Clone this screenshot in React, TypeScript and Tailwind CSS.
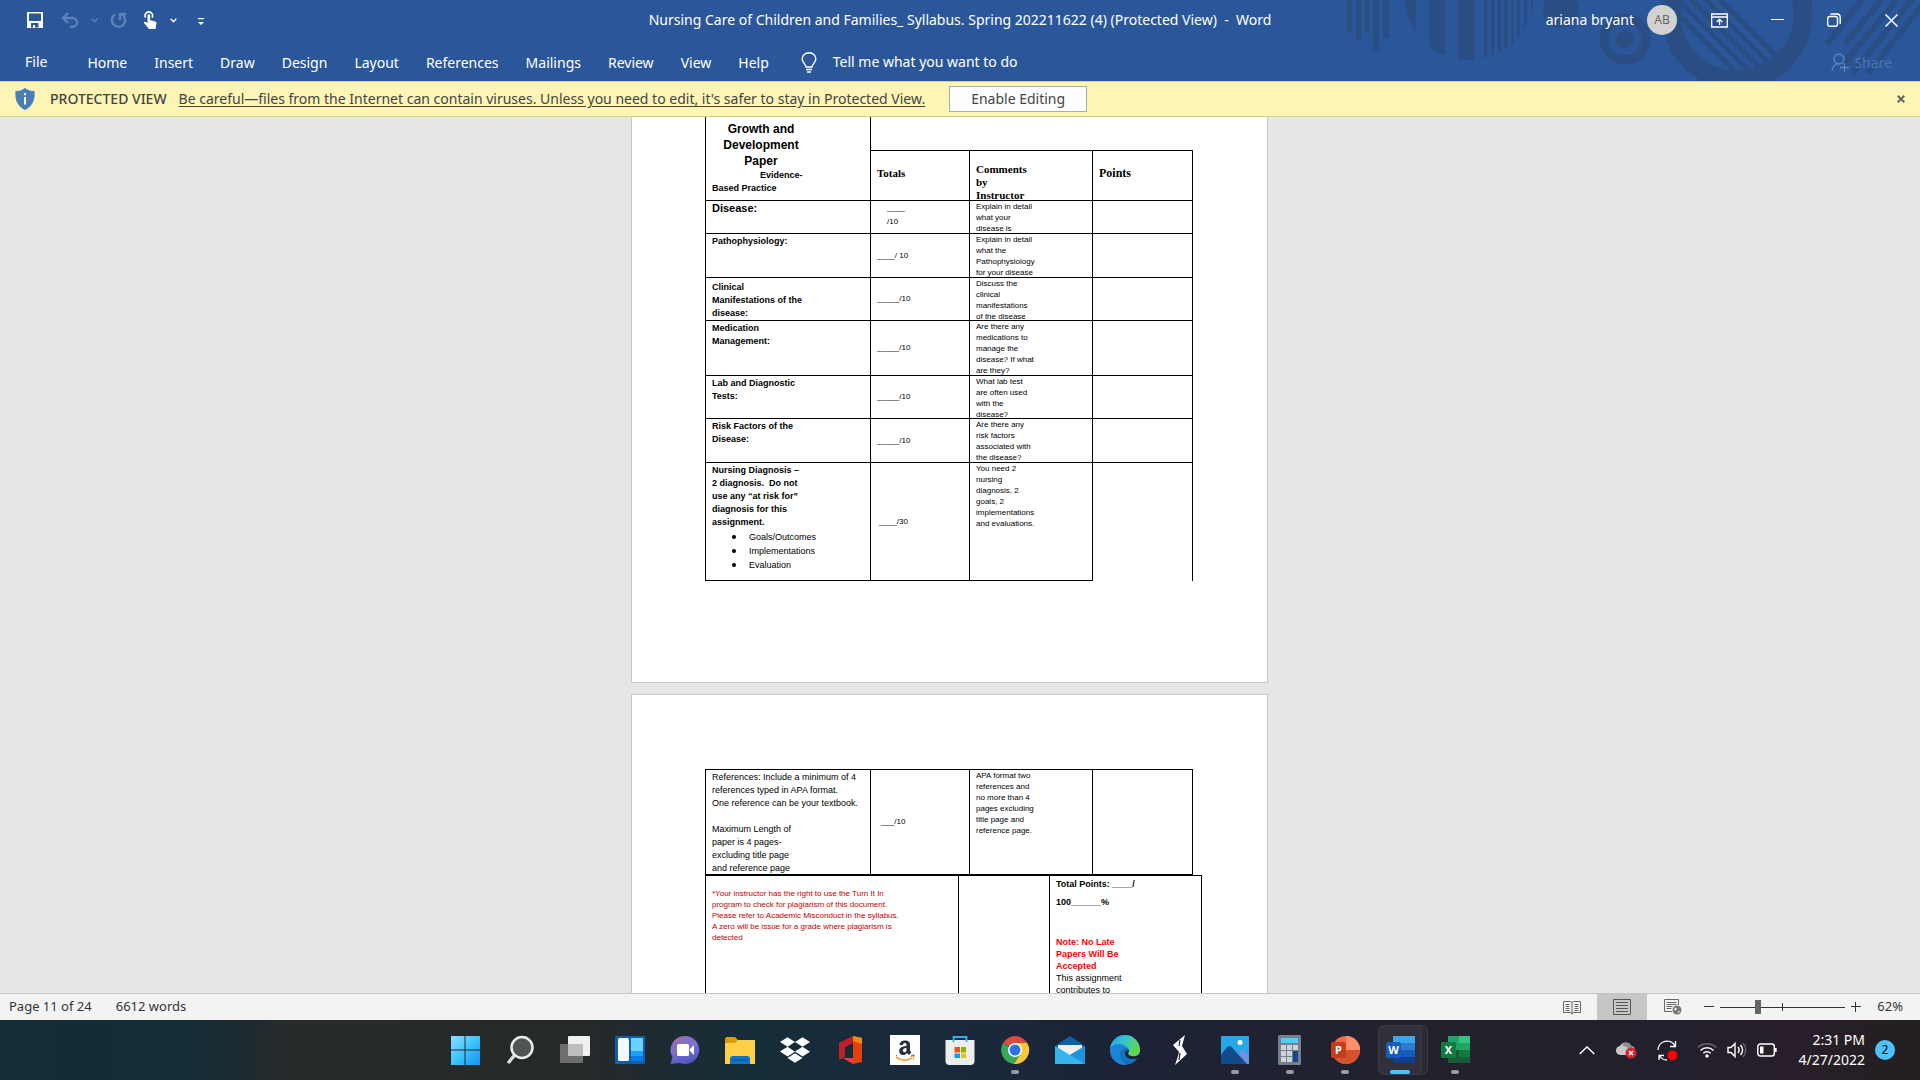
import type { ReactNode } from "react";
import { FaAmazon, FaDropbox } from "react-icons/fa";

type RubricRow = {
  title: string[];
  score: string;
  comment: string[];
  height: string;
  titlePad?: string;
};

const TABS = ["Home", "Insert", "Draw", "Design", "Layout", "References", "Mailings", "Review", "View", "Help"];

const ROWS: RubricRow[] = [
  {
    title: ["Pathophysiology:"],
    score: "____/ 10",
    comment: ["Explain in detail", "what the", "Pathophysiology", "for your disease"],
    height: "h-[44px]",
  },
  {
    title: ["Clinical", "Manifestations of the", "disease:"],
    score: "_____/10",
    comment: ["Discuss the", "clinical", "manifestations", "of the disease"],
    height: "h-[43px]",
    titlePad: "pt-[3px]",
  },
  {
    title: ["Medication", "Management:"],
    score: "_____/10",
    comment: ["Are there any", "medications to", "manage the", "disease? If what", "are they?"],
    height: "h-[55px]",
  },
  {
    title: ["Lab and Diagnostic", "Tests:"],
    score: "_____/10",
    comment: ["What lab test", "are often used", "with the", "disease?"],
    height: "h-[43px]",
  },
  {
    title: ["Risk Factors of the", "Disease:"],
    score: "_____/10",
    comment: ["Are there any", "risk factors", "associated with", "the disease?"],
    height: "h-[44px]",
  },
];

function Lines({ text }: { text: string[] }) {
  return (
    <>
      {text.map((t, i) => (
        <div key={i} className="whitespace-pre">{t}</div>
      ))}
    </>
  );
}

function Comment({ text }: { text: string[] }) {
  return (
    <div className="-mb-2 text-[8px] leading-[11px]">
      <Lines text={text} />
    </div>
  );
}

const cell = "border-r border-b border-black p-0 pl-[6px] align-top";

function RubricColumns() {
  return (
    <colgroup>
      <col className="w-[165px]" />
      <col className="w-[99px]" />
      <col className="w-[123px]" />
      <col className="w-[100px]" />
    </colgroup>
  );
}

function FirstPage() {
  return (
    <section className="h-[566px] w-[637px] shrink-0 border border-t-0 border-[#c6c6c6] bg-white pl-[73px]">
      <table className="w-[488px] table-fixed border-separate border-spacing-0 border-l border-black text-left">
        <RubricColumns />
        <thead>
          <tr className="h-[34px]">
            <th rowSpan={2} className={`${cell} font-bold`}>
              <div className="w-[98px] pt-1 text-center text-xs leading-4">
                <Lines text={["Growth and", "Development", "Paper"]} />
              </div>
              <div className="text-[9px] leading-[13px]">
                <div className="pl-12">Evidence-</div>
                <div>Based Practice</div>
              </div>
            </th>
            <td colSpan={3} className="border-b border-black p-0" />
          </tr>
          <tr className="h-[50px] font-['Liberation_Serif',serif]">
            <th className={`${cell} pt-4 text-[11px] leading-[13px]`}>Totals</th>
            <th className={`${cell} pt-3`}>
              <div className="-mb-2 text-[11px] leading-[13px]">
                <Lines text={["Comments", "by", "Instructor"]} />
              </div>
            </th>
            <th className={`${cell} pt-4 text-xs leading-[13px]`}>Points</th>
          </tr>
        </thead>
        <tbody>
          <tr className="h-[33px]">
            <th className={`${cell} pt-[1px] text-[11px] leading-[13px]`}>Disease:</th>
            <td className={`${cell} text-[8px] leading-[14px]`}>
              <div className="pl-[10px]">
                <Lines text={["____", "/10"]} />
              </div>
            </td>
            <td className={cell}>
              <Comment text={["Explain in detail", "what your", "disease is"]} />
            </td>
            <td className={cell} />
          </tr>
          {ROWS.map((row) => (
            <tr key={row.title[0]} className={row.height}>
              <th className={`${cell} ${row.titlePad ?? "pt-[1px]"} text-[9px] leading-[13px]`}>
                <Lines text={row.title} />
              </th>
              <td className="border-r border-b border-black p-0 pl-[6px] align-middle text-[8px] leading-3">{row.score}</td>
              <td className={cell}>
                <Comment text={row.comment} />
              </td>
              <td className={cell} />
            </tr>
          ))}
          <tr className="h-[118px]">
            <th className={`${cell} pt-[1px] text-[9px] leading-[13px]`}>
              <Lines text={["Nursing Diagnosis –", "2 diagnosis.  Do not", "use any “at risk for”", "diagnosis for this", "assignment."]} />
              <ul className="pt-px pl-5 font-normal leading-[14px]">
                {["Goals/Outcomes", "Implementations", "Evaluation"].map((b) => (
                  <li key={b} className="flex items-center gap-[13px]">
                    <span className="size-1 rounded-full bg-black" />
                    {b}
                  </li>
                ))}
              </ul>
            </th>
            <td className="border-r border-b border-black p-0 pl-2 align-middle text-[8px] leading-3">____/30</td>
            <td className={cell}>
              <Comment text={["You need 2", "nursing", "diagnosis, 2", "goals, 2", "implementations", "and evaluations."]} />
            </td>
            <td className="border-r border-black p-0" />
          </tr>
        </tbody>
      </table>
    </section>
  );
}

function SecondPage() {
  return (
    <section className="h-[826px] w-[637px] shrink-0 border border-[#c6c6c6] bg-white pt-[74px] pl-[73px]">
      <table className="w-[488px] table-fixed border-separate border-spacing-0 border-t border-l border-black">
        <RubricColumns />
        <tbody>
          <tr className="h-[105px]">
            <td className={`${cell} pt-[1px]`}>
              <div className="-mb-2 text-[9px] leading-[13px]">
                <Lines
                  text={[
                    "References: Include a minimum of 4",
                    "references typed in APA format.",
                    "One reference can be your textbook.",
                    " ",
                    "Maximum Length of",
                    "paper is 4 pages-",
                    "excluding title page",
                    "and reference page",
                  ]}
                />
              </div>
            </td>
            <td className="border-r border-b border-black p-0 pl-[10px] align-middle text-[8px] leading-3">___/10</td>
            <td className={cell}>
              <Comment text={["APA format two", "references and", "no more than 4", "pages excluding", "title page and", "reference page."]} />
            </td>
            <td className={cell} />
          </tr>
        </tbody>
      </table>
      <table className="w-[497px] table-fixed border-separate border-spacing-0 border-t border-l border-black">
        <colgroup>
          <col className="w-[253px]" />
          <col className="w-[91px]" />
          <col className="w-[152px]" />
        </colgroup>
        <tbody>
          <tr className="h-[240px]">
            <td className={`${cell} pt-3 text-[8px] leading-[11px] text-[#c00000]`}>
              <Lines
                text={[
                  "*Your instructor has the right to use the Turn It In",
                  "program to check for plagiarism of this document.",
                  "Please refer to Academic Misconduct in the syllabus.",
                  "A zero will be issue for a grade where plagiarism is",
                  "detected",
                ]}
              />
            </td>
            <td className={cell} />
            <td className={`${cell} text-[9px] leading-3`}>
              <div className="font-bold leading-4">Total Points: ____/</div>
              <div className="font-bold leading-5">100______%</div>
              <div className="pt-6 font-bold text-[#ff0000]">
                <Lines text={["Note: No Late", "Papers Will Be", "Accepted"]} />
              </div>
              <Lines text={["This assignment", "contributes to"]} />
            </td>
          </tr>
        </tbody>
      </table>
    </section>
  );
}

function HeaderArt() {
  return (
    <svg className="pointer-events-none absolute top-0 right-0" width="580" height="81" viewBox="1340 0 580 81" fill="#2a4d84" aria-hidden="true">
      <defs>
        <clipPath id="disc"><circle cx="1469" cy="-5" r="65" /></clipPath>
        <clipPath id="lens"><circle cx="1737" cy="14" r="57" /></clipPath>
      </defs>
      <path d="M1347 0h5v32h-5zM1356 0h5v41h-5zM1365 0h5v32h-5zM1373 0h6v52h-6zM1383 0h6v38h-6z" />
      <g clipPath="url(#disc)">
        <path d="M1404 0h12v60h-12zM1429 0h16v60h-16zM1458 0h16v62h-16zM1484 0h3v60h-3zM1491 0h3v60h-3zM1498 0h3v60h-3zM1504 0h4v60h-4zM1511 0h3v60h-3zM1517 0h3v60h-3zM1524 0h3v60h-3zM1531 0h3v60h-3z" />
      </g>
      <circle cx="1561" cy="10" r="18" />
      <circle cx="1625" cy="39" r="21" fill="none" stroke="#2a4d84" strokeWidth="9" />
      <circle cx="1625" cy="39" r="9" />
      <circle cx="1737" cy="14" r="66" fill="none" stroke="#2a4d84" strokeWidth="19" />
      <g clipPath="url(#lens)" stroke="#2a4d84" strokeWidth="5">
        <path d="M1672 8l80 80M1672 -6l90 90M1672 -20l100 100M1676 -30l100 100M1690 -30l100 100" />
      </g>
      <path d="M1863 -2l-36 46M1883 -2l-38 46M1898 -2l-54 66M1913 -2l-60 75M1928 -2l-60 75" stroke="#2a4d84" strokeWidth="6" />
    </svg>
  );
}

function TitleBar() {
  return (
    <header className="relative h-[81px] shrink-0 bg-[#2b579a] text-white">
      <HeaderArt />
      <div className="relative grid h-10 grid-cols-[1fr_auto_1fr] items-center">
        <div className="flex items-center pl-[27px]">
          <button aria-label="Save" className="mr-[18px]">
            <svg width="16" height="16" viewBox="0 0 16 16">
              <path d="M0 0h16v16H0zM2 1.500v7.500h12V1.500zM4 11v4.500h2V13h2v2.500h3.500V11z" fill="#fff" fillRule="evenodd" />
            </svg>
          </button>
          <button aria-label="Undo" className="mr-3">
            <svg width="18" height="16" viewBox="0 0 18 16" fill="none" stroke="#5f82b8" strokeWidth="2.4">
              <path d="M7 1L2 6l5 5M2 6h9a5 4.500 0 0 1 0 9H9" />
            </svg>
          </button>
          <Caret color="#5f82b8" />
          <button aria-label="Redo" className="mr-4 ml-3">
            <svg width="17" height="17" viewBox="0 0 17 17" fill="none" stroke="#5f82b8" strokeWidth="2.400">
              <path d="M5 2.500a6.700 6.700 0 1 0 7 0M10 8V2h6" />
            </svg>
          </button>
          <button aria-label="Touch mode" className="mr-[13px]">
            <svg width="14" height="18" viewBox="0 0 14 18" fill="#fff">
              <path d="M4.500 4.500a1.300 1.300 0 0 1 2.600 0V9l5 1.400c1 .3 1.500 1 1.300 2L12.500 18H6L.6 11.600c.4-1 1.800-1 2.600-.3l1.300 1z" />
              <path d="M2.600 6.500a3.700 3.700 0 1 1 6.400 0" fill="none" stroke="#fff" strokeWidth="1.600" />
            </svg>
          </button>
          <Caret color="#fff" />
          <button aria-label="Customize toolbar" className="mt-1 ml-5">
            <svg width="8" height="8" viewBox="0 0 8 8" fill="#fff"><path d="M1 0h6v1.300H1zM1 4h6L4 7z" /></svg>
          </button>
        </div>
        <h1 className="text-sm whitespace-pre">Nursing Care of Children and Families_ Syllabus. Spring 202211622 (4) (Protected View)  -  Word</h1>
        <div className="flex items-center justify-end pr-[22px]">
          <span className="text-sm">ariana bryant</span>
          <span className="ml-[13px] flex size-[30px] items-center justify-center rounded-full bg-[#d2d2d2] text-xs text-[#666]">AB</span>
          <button aria-label="Ribbon display options" className="ml-[34px]">
            <svg width="17" height="15" viewBox="0 0 17 15" fill="none" stroke="#fff" strokeWidth="1.300">
              <path d="M.7 1h15.600v13H.7zM.7 4h15.600M8.500 12V6.500M5.700 9l2.800-2.700L11.300 9" />
            </svg>
          </button>
          <button aria-label="Minimize" className="ml-[43px]">
            <svg width="13" height="15" viewBox="0 0 13 15"><path d="M0 6.500h13" stroke="#fff" /></svg>
          </button>
          <button aria-label="Restore" className="ml-[43px]">
            <svg width="14" height="14" viewBox="0 0 14 14" fill="none" stroke="#fff" strokeWidth="1.400">
              <rect x=".7" y="3.500" width="9.800" height="9.800" rx="2" />
              <path d="M3.500 1h6.300A3.500 3.500 0 0 1 13.200 4.500V11" />
            </svg>
          </button>
          <button aria-label="Close" className="ml-[44px]">
            <svg width="13" height="13" viewBox="0 0 13 13"><path d="M.5.5l12 12M12.500.5l-12 12" stroke="#fff" strokeWidth="1.500" /></svg>
          </button>
        </div>
      </div>
      <div className="relative flex h-[41px] items-center pt-[3px] pl-[25px] text-sm">
        <button className="mr-10">File</button>
        <nav className="flex gap-[27px] pt-px">
          {TABS.map((tab) => (
            <button key={tab}>{tab}</button>
          ))}
        </nav>
        <button className="ml-8 flex items-center gap-4">
          <svg width="16" height="21" viewBox="0 0 16 21" fill="none" stroke="#fff" strokeWidth="1.400">
            <path d="M5 15c0-3-3.800-4-3.800-8a6.800 6.300 0 0 1 13.600 0c0 4-3.800 5-3.800 8zM5 17.500h6M6 20h4" />
          </svg>
          Tell me what you want to do
        </button>
        <button disabled className="mr-7 ml-auto flex items-center gap-[5px] pt-px text-[#4c75b0]">
          <svg width="18" height="19" viewBox="0 0 18 19" fill="none" stroke="#6286bb" strokeWidth="1.300">
            <circle cx="8" cy="6" r="5" />
            <path d="M1 18c.3-3.500 2-6 5-7M13.500 10v9M9 14.500h9" />
          </svg>
          Share
        </button>
      </div>
    </header>
  );
}

function Caret({ color }: { color: string }) {
  return (
    <svg width="7" height="5" viewBox="0 0 7 5" fill="none" stroke={color} strokeWidth="1.300" aria-hidden="true">
      <path d="M.7.8l2.800 2.900L6.300.8" />
    </svg>
  );
}

function ProtectedBar() {
  return (
    <div className="flex h-9 shrink-0 items-center border-y border-[#d5d280] bg-[#fcf5b5] pr-[15px] pl-[15px] text-sm text-[#444]">
      <svg width="20" height="22" viewBox="0 0 20 22" aria-hidden="true">
        <path d="M10 0c3 2.500 6 3 9.500 3 .8 8-1.500 15-9.500 19C2 18-.3 11 .5 3 4 3 7 2.500 10 0z" fill="#4a7ebb" />
        <path d="M9 5h2v2.300H9zM9 9h2v7.500H9z" fill="#fff" />
      </svg>
      <span className="ml-[15px] font-medium">PROTECTED VIEW</span>
      <a href="#protected-view" className="ml-3 underline underline-offset-2">
        Be careful—files from the Internet can contain viruses. Unless you need to edit, it's safer to stay in Protected View.
      </a>
      <button className="ml-6 h-[26px] w-[138px] border border-[#ababab] bg-[#fdfdfd]">Enable Editing</button>
      <button aria-label="Close message" className="ml-auto">
        <svg width="8" height="8" viewBox="0 0 8 8"><path d="M.7.7l6.600 6.600M7.300.7L.7 7.300" stroke="#666" strokeWidth="2" /></svg>
      </button>
    </div>
  );
}

function StatusBar() {
  return (
    <footer className="flex h-[27px] shrink-0 items-center border-t border-[#c6c6c6] bg-[#f3f3f3] pr-[17px] pl-[9px] text-[13px] text-[#333]">
      <span>Page 11 of 24</span>
      <span className="ml-6">6612 words</span>
      <button aria-label="Read mode" className="ml-auto">
        <svg width="18" height="15" viewBox="0 0 18 15" fill="none" stroke="#666" strokeWidth="1">
          <path d="M.5 1.500h7l1.500 1 1.500-1h7v11h-7l-1.500 1-1.500-1h-7zM9 2v12.500M2.500 4.500h4M2.500 6.500h4M2.500 8.500h4M2.500 10.500h4M11.500 4.500h4M11.500 6.500h4M11.500 8.500h4M11.500 10.500h4" />
        </svg>
      </button>
      <button aria-label="Print layout" className="ml-4 flex h-[26px] w-[50px] items-center justify-center bg-[#c6c6c6]">
        <svg width="18" height="16" viewBox="0 0 18 16" fill="none" stroke="#555" strokeWidth="1">
          <path d="M.5.5h17v15H.5zM3 3.500h12M3 6.500h12M3 9.500h12M3 12.500h12" />
        </svg>
      </button>
      <button aria-label="Web layout" className="ml-[17px]">
        <svg width="18" height="16" viewBox="0 0 18 16" fill="none" stroke="#666" strokeWidth="1">
          <path d="M8 12.500H.5v-12h14V6M2.500 3.500h10M2.500 5.500h10M2.500 7.500h6M2.500 9.500h5" />
          <circle cx="13" cy="11" r="4.500" fill="#777" stroke="none" />
          <path d="M11 8.500l2 1-1 2-2-.5zM14 12l2 .5-1.500 2z" fill="#eee" stroke="none" />
        </svg>
      </button>
      <button aria-label="Zoom out" className="ml-[22px]">
        <svg width="10" height="10" viewBox="0 0 10 10"><path d="M0 4.500h10" stroke="#333" /></svg>
      </button>
      <div className="relative ml-1.5 flex h-4 w-[125px] items-center">
        <span className="absolute left-[62px] h-2 w-px bg-[#333]" />
        <input
          type="range"
          aria-label="Zoom"
          min={10}
          max={200}
          defaultValue={65}
          className="relative h-[15px] w-full appearance-none bg-transparent [&::-webkit-slider-runnable-track]:h-px [&::-webkit-slider-runnable-track]:bg-[#333] [&::-webkit-slider-thumb]:-mt-[7px] [&::-webkit-slider-thumb]:h-[14px] [&::-webkit-slider-thumb]:w-[6px] [&::-webkit-slider-thumb]:appearance-none [&::-webkit-slider-thumb]:bg-[#666]"
        />
      </div>
      <button aria-label="Zoom in" className="ml-1.5">
        <svg width="10" height="10" viewBox="0 0 10 10"><path d="M0 4.500h10M4.500 0v10" stroke="#333" /></svg>
      </button>
      <button className="ml-4">62%</button>
    </footer>
  );
}

function OfficeTile({ letter, badge, children }: { letter: string; badge: string; children: ReactNode }) {
  return (
    <svg width="30" height="30" viewBox="0 0 30 30">
      {children}
      <rect x="1" y="7" width="15" height="16" rx="1.500" fill={badge} />
      <text x="8.500" y="19" textAnchor="middle" fill="#fff" fontSize="11" fontWeight="700">{letter}</text>
    </svg>
  );
}

const APPS: { name: string; state?: "open" | "active"; icon: ReactNode }[] = [
  {
    name: "Start",
    icon: (
      <svg width="30" height="30" viewBox="0 0 30 30">
        <defs>
          <linearGradient id="win" x1="0" y1="0" x2="1" y2="1"><stop stopColor="#8ee0ff" /><stop offset=".5" stopColor="#3fc4ff" /><stop offset="1" stopColor="#0f90f5" /></linearGradient>
        </defs>
        <path d="M1 1h13.500v13.500H1zM15.500 1H30v13.500H15.500zM1 15.500h13.500V30H1zM15.500 15.500H30V30H15.500z" fill="url(#win)" />
      </svg>
    ),
  },
  {
    name: "Search",
    icon: (
      <svg width="30" height="30" viewBox="0 0 30 30">
        <path d="M10.500 19L4 27" stroke="#dcdcdc" strokeWidth="3.500" strokeLinecap="round" />
        <circle cx="17" cy="12.500" r="10.500" fill="#515455" stroke="#ececec" strokeWidth="2.500" />
      </svg>
    ),
  },
  {
    name: "Task view",
    icon: (
      <svg width="30" height="30" viewBox="0 0 30 30">
        <rect x="8" y="1" width="22" height="20" rx="1" fill="#f0f0f0" />
        <rect x="0" y="9" width="23" height="19" rx="1" fill="#6e6e6e" />
        <path d="M8 9h15v12H8z" fill="#bdbdbd" />
      </svg>
    ),
  },
  {
    name: "Widgets",
    icon: (
      <svg width="30" height="30" viewBox="0 0 30 30">
        <rect x="0" y="1" width="30" height="28" rx="1.500" fill="#0f5faf" />
        <rect x="3" y="3" width="11" height="23" rx="1.500" fill="#f7f7f7" />
        <path d="M16 3h12v13H16z" fill="#69d2ff" /><path d="M16 16h12v5H16z" fill="#1fa0f5" /><path d="M16 21h12v5H16z" fill="#0a7be0" />
      </svg>
    ),
  },
  {
    name: "Chat",
    icon: (
      <svg width="30" height="30" viewBox="0 0 30 30">
        <defs>
          <linearGradient id="chat" x1=".2" y1="0" x2=".6" y2="1"><stop stopColor="#a06bb0" /><stop offset=".5" stopColor="#7a6fd0" /><stop offset="1" stopColor="#5053c4" /></linearGradient>
        </defs>
        <path d="M15 1a14 14 0 1 1-5 27L.5 29l2-7A14 14 0 0 1 15 1z" fill="url(#chat)" />
        <rect x="7" y="9" width="12" height="12" rx="1.500" fill="#fff" />
        <path d="M20 14l4-4v10l-4-4z" fill="#fff" />
      </svg>
    ),
  },
  {
    name: "File Explorer",
    icon: (
      <svg width="30" height="30" viewBox="0 0 30 30">
        <path d="M0 4c0-1 .5-2 2-2h8l3 3v6H0z" fill="#d99b06" />
        <path d="M0 8h10l3-3h17v24H0z" fill="#ffcf48" />
        <path d="M5 29v-5c0-2 1-3 3-3h14c2 0 3 1 3 3v5z" fill="#1173c5" />
        <path d="M8 25h14" stroke="#0a4f8f" />
      </svg>
    ),
  },
  { name: "Dropbox", icon: <FaDropbox size={30} color="#fff" /> },
  {
    name: "Office",
    icon: (
      <svg width="30" height="30" viewBox="0 0 30 30">
        <path d="M4 8l14-7v7l-8 4v10l-6 3z" fill="#c0202a" />
        <path d="M18 1l9 2v24l-9 2z" fill="#e2420c" />
        <path d="M18 1l9 2v6l-9-3z" fill="#f08a10" />
        <path d="M8 23h10v6z" fill="#f03a50" />
      </svg>
    ),
  },
  {
    name: "Amazon",
    icon: (
      <span className="relative flex size-[30px] items-center justify-center bg-white">
        <FaAmazon size={22} color="#26303c" />
        <svg width="20" height="6" viewBox="0 0 20 6" className="absolute bottom-[3px] bg-white">
          <path d="M1 1c5 4 11 4 16 1" fill="none" stroke="#f2a33a" strokeWidth="1.800" /><path d="M15 .6h4l-1 3.400" fill="none" stroke="#f2a33a" />
        </svg>
      </span>
    ),
  },
  {
    name: "Microsoft Store",
    icon: (
      <svg width="30" height="30" viewBox="0 0 30 30">
        <path d="M.5 5h29v21a4 4 0 0 1-4 4h-21a4 4 0 0 1-4-4z" fill="#ededed" />
        <path d="M8.500 7V2h13v5" fill="none" stroke="#2fb3f0" strokeWidth="1.800" />
        <path d="M9.500 12H15v5.500H9.500z" fill="#f25022" /><path d="M16 12h5v5.500h-5z" fill="#7fba00" />
        <path d="M9.500 18.500H15V23H9.500z" fill="#00a4ef" /><path d="M16 18.500h5V23h-5z" fill="#ffb900" />
      </svg>
    ),
  },
  {
    name: "Chrome",
    state: "open",
    icon: (
      <svg width="30" height="30" viewBox="0 0 30 30">
        <path d="M15 15L3 8a14 14 0 0 1 24.200 0z" fill="#dd4b3e" />
        <path d="M15 15h-1L3 8a14 14 0 0 0 11 21l7-11z" fill="#3aa757" />
        <path d="M15 8h12.200A14 14 0 0 1 14 29l7-11z" fill="#f9c83a" />
        <circle cx="15" cy="15" r="7" fill="#fff" /><circle cx="15" cy="15" r="5.500" fill="#2f74e6" />
      </svg>
    ),
  },
  {
    name: "Mail",
    icon: (
      <svg width="30" height="30" viewBox="0 0 30 30">
        <path d="M0 11L15 1l15 10v8H0z" fill="#0f5fa8" />
        <path d="M3 10h24v4L15 21 3 14z" fill="#f0f0f0" />
        <path d="M0 11l15 9 15-9v18H0z" fill="#35b4ee" /><path d="M30 11L15 20l15 9z" fill="#1f93dc" />
      </svg>
    ),
  },
  {
    name: "Edge",
    icon: (
      <svg width="30" height="30" viewBox="0 0 30 30">
        <defs>
          <linearGradient id="edge" x1="0" y1="0" x2="1" y2=".4"><stop stopColor="#2b9fe0" /><stop offset=".5" stopColor="#35c4cf" /><stop offset="1" stopColor="#62d64a" /></linearGradient>
        </defs>
        <circle cx="15" cy="15" r="15" fill="#1272c4" />
        <path d="M0 15a15 15 0 0 1 30 0c0 4-3 6.500-7 6.500-3 0-5-1-5-2.500 0-1 1-1.500 1-3.500 0-2.500-3-4.500-7-4.500-5 0-10 1-12 4z" fill="url(#edge)" />
        <path d="M0 15c0-3 4-6 9-6 4 0 8 2 9 5-4-2-8 1-8 5 0 3 2 7 6 11C6 30 0 23 0 15z" fill="#1b84d6" />
        <path d="M15 18c0 4 4 6.500 9 6 2 0 3-.5 4-1l3-4-5 2c-4 1-8-.5-8-2.500 0-1 1-1.500 1-3.500-2 0-4 1-4 3z" fill="#1c2337" />
      </svg>
    ),
  },
  {
    name: "Stylus",
    icon: (
      <svg width="30" height="30" viewBox="0 0 30 30" fill="#fff">
        <path d="M20 0l-3 11 5 8-12 11 3-9 1-4-6-7z" />
        <path d="M15 5l-1 6M15 18l-1 7" stroke="#1c2230" strokeWidth="1.200" />
      </svg>
    ),
  },
  {
    name: "Photos",
    state: "open",
    icon: (
      <svg width="30" height="30" viewBox="0 0 30 30">
        <rect x="1" y="1" width="28" height="28" rx="1" fill="#27a6e8" />
        <path d="M13 29l9-15 7 7v8z" fill="#6f8fe0" />
        <path d="M1 20l6-8c1.500-1.500 3-1.500 4.500 0L27 29H1z" fill="#134a8c" />
        <circle cx="20" cy="7.500" r="2.500" fill="#fff" />
      </svg>
    ),
  },
  {
    name: "Calculator",
    state: "open",
    icon: (
      <svg width="30" height="30" viewBox="0 0 30 30">
        <rect x="3" y="0" width="23" height="30" rx="1.500" fill="#75808a" />
        <path d="M6 3h17v5H6z" fill="#43d3fb" />
        <path d="M6 10h5v5H6zM12 10h5v5h-5zM18 10h5v5h-5zM6 16h5v5H6zM12 16h5v5h-5zM6 22h5v5H6zM12 22h5v5h-5z" fill="#ccd3da" />
        <path d="M18 16h5v11h-5z" fill="#17498a" />
      </svg>
    ),
  },
  {
    name: "PowerPoint",
    state: "open",
    icon: (
      <OfficeTile letter="P" badge="#c43e1c">
        <circle cx="16" cy="15" r="14" fill="#ed6c47" />
        <path d="M16 1a14 14 0 0 1 14 14H16z" fill="#ff8f6b" /><path d="M2 15h28a14 14 0 0 1-28 0z" fill="#d35230" />
      </OfficeTile>
    ),
  },
  {
    name: "Word",
    state: "active",
    icon: (
      <OfficeTile letter="W" badge="#185abd">
        <path d="M8 1h22v8H8z" fill="#41a5ee" /><path d="M8 8h22v7H8z" fill="#2b7cd3" />
        <path d="M8 15h22v7H8z" fill="#185abd" /><path d="M8 22h22v6H8z" fill="#103f91" />
      </OfficeTile>
    ),
  },
  {
    name: "Excel",
    state: "open",
    icon: (
      <OfficeTile letter="X" badge="#107c41">
        <path d="M8 1h11v14H8z" fill="#21a366" /><path d="M19 1h11v7H19z" fill="#33c481" /><path d="M19 8h11v7H19z" fill="#21a366" />
        <path d="M8 15h11v13H8z" fill="#185c37" /><path d="M19 15h11v7H19z" fill="#107c41" /><path d="M19 22h11v6H19z" fill="#185c37" />
      </OfficeTile>
    ),
  },
];

function Taskbar() {
  return (
    <div className="grid h-[60px] shrink-0 grid-cols-[1fr_auto_1fr] items-center bg-[linear-gradient(90deg,#142c33_0%,#132c36_10%,#272a2b_15%,#262929_30%,#152d38_39%,#1a293c_48%,#1c2235_60%,#22222c_73%,#231f2c_87%,#281e2a_94%,#232020_100%)] text-white">
      <nav className="col-start-2 flex">
        {APPS.map((app) => (
          <button key={app.name} aria-label={app.name} className="relative flex h-[60px] w-[55px] items-center justify-center">
            {app.state === "active" && (
              <>
                <span className="absolute top-[5px] left-[10px] h-[50px] w-[45px] rounded-md border border-[#3b3c45] bg-[#2a2b34]" />
                <span className="absolute top-[5px] left-[5px] h-[50px] w-[44px] rounded-md border border-[#3b3c45] bg-[#30313a]" />
              </>
            )}
            <span className="relative">{app.icon}</span>
            {app.state === "open" && <span className="absolute bottom-[6px] h-1 w-2 rounded-full bg-[#9a9ba1]" />}
            {app.state === "active" && <span className="absolute bottom-[6px] h-1 w-5 rounded-full bg-[#4cc2ff]" />}
          </button>
        ))}
      </nav>
      <div className="flex items-center justify-end pr-[25px]">
        <button aria-label="Show hidden icons">
          <svg width="16" height="9" viewBox="0 0 16 9"><path d="M.7 8L8 .9 15.300 8" fill="none" stroke="#fff" strokeWidth="1.400" /></svg>
        </button>
        <button aria-label="OneDrive" className="ml-[21px]">
          <svg width="21" height="18" viewBox="0 0 21 18">
            <path d="M5 14a4.500 4.500 0 0 1-1-9C6 1 12 0 15 5c3 .5 4 2 4 5l-6 4z" fill="#c9c9c9" /><path d="M6 4c3-4 8-3 9.500 1L19 9l-9-3z" fill="#8c8c8c" />
            <circle cx="15" cy="12" r="5.500" fill="#d9202e" /><path d="M13 10l4 4M17 10l-4 4" stroke="#fff" strokeWidth="1.500" />
          </svg>
        </button>
        <button aria-label="Updates" className="ml-5">
          <svg width="21" height="21" viewBox="0 0 21 21" fill="none" stroke="#fff" strokeWidth="1.300">
            <path d="M1 10a9 9 0 0 1 17-4M18.500 1v5.500H13M2 20v-4.500h5M2 15.500c2 3 4.500 4.500 8 4.500" />
            <circle cx="15.500" cy="15.500" r="5" fill="#f00" stroke="none" />
          </svg>
        </button>
        <button aria-label="Network, volume and battery" className="ml-[19px] flex items-center gap-[10px]">
          <svg width="20" height="16" viewBox="0 0 20 16" fill="none" stroke="#fff" strokeWidth="1.500">
            <path d="M.8 5.500a13 13 0 0 1 18.400 0" stroke="#6a6570" />
            <path d="M3.500 8.500a9.200 9.200 0 0 1 13 0M6.300 11.200a5.200 5.200 0 0 1 7.400 0" /><circle cx="10" cy="14" r="1.700" fill="#fff" stroke="none" />
          </svg>
          <svg width="20" height="18" viewBox="0 0 20 18" fill="none" stroke="#fff" strokeWidth="1.400">
            <path d="M1 6.500h3l4-4v13l-4-4H1zM11 6c1.500 2 1.500 4 0 6M13.500 4c2.500 3 2.500 7 0 10" /><path d="M16 2c3.500 4 3.500 10 0 14" stroke="#6a6570" />
          </svg>
          <svg width="20" height="14" viewBox="0 0 20 14" fill="none" stroke="#fff" strokeWidth="1.400">
            <rect x=".8" y="1" width="16.500" height="12" rx="2.500" /><path d="M3 3.500h3.500v7H3z" fill="#fff" stroke="none" /><path d="M18.700 5v4" strokeWidth="2" />
          </svg>
        </button>
        <div className="ml-[22px] text-right text-sm leading-5">
          <div>2:31 PM</div>
          <div>4/27/2022</div>
        </div>
        <button aria-label="2 notifications" className="ml-[10px] size-5 rounded-full bg-[#4cc2ff] text-xs leading-5 text-black">2</button>
      </div>
    </div>
  );
}

export default function App() {
  return (
    <div className="flex h-screen flex-col overflow-hidden bg-[#e6e6e6] font-['Noto_Sans','Open_Sans',sans-serif]">
      <TitleBar />
      <ProtectedBar />
      <main className="flex min-h-0 flex-1 flex-col items-center gap-[11px] overflow-hidden pr-[21px] font-['Liberation_Sans',Arial,sans-serif] text-black">
        <FirstPage />
        <SecondPage />
      </main>
      <StatusBar />
      <Taskbar />
    </div>
  );
}
